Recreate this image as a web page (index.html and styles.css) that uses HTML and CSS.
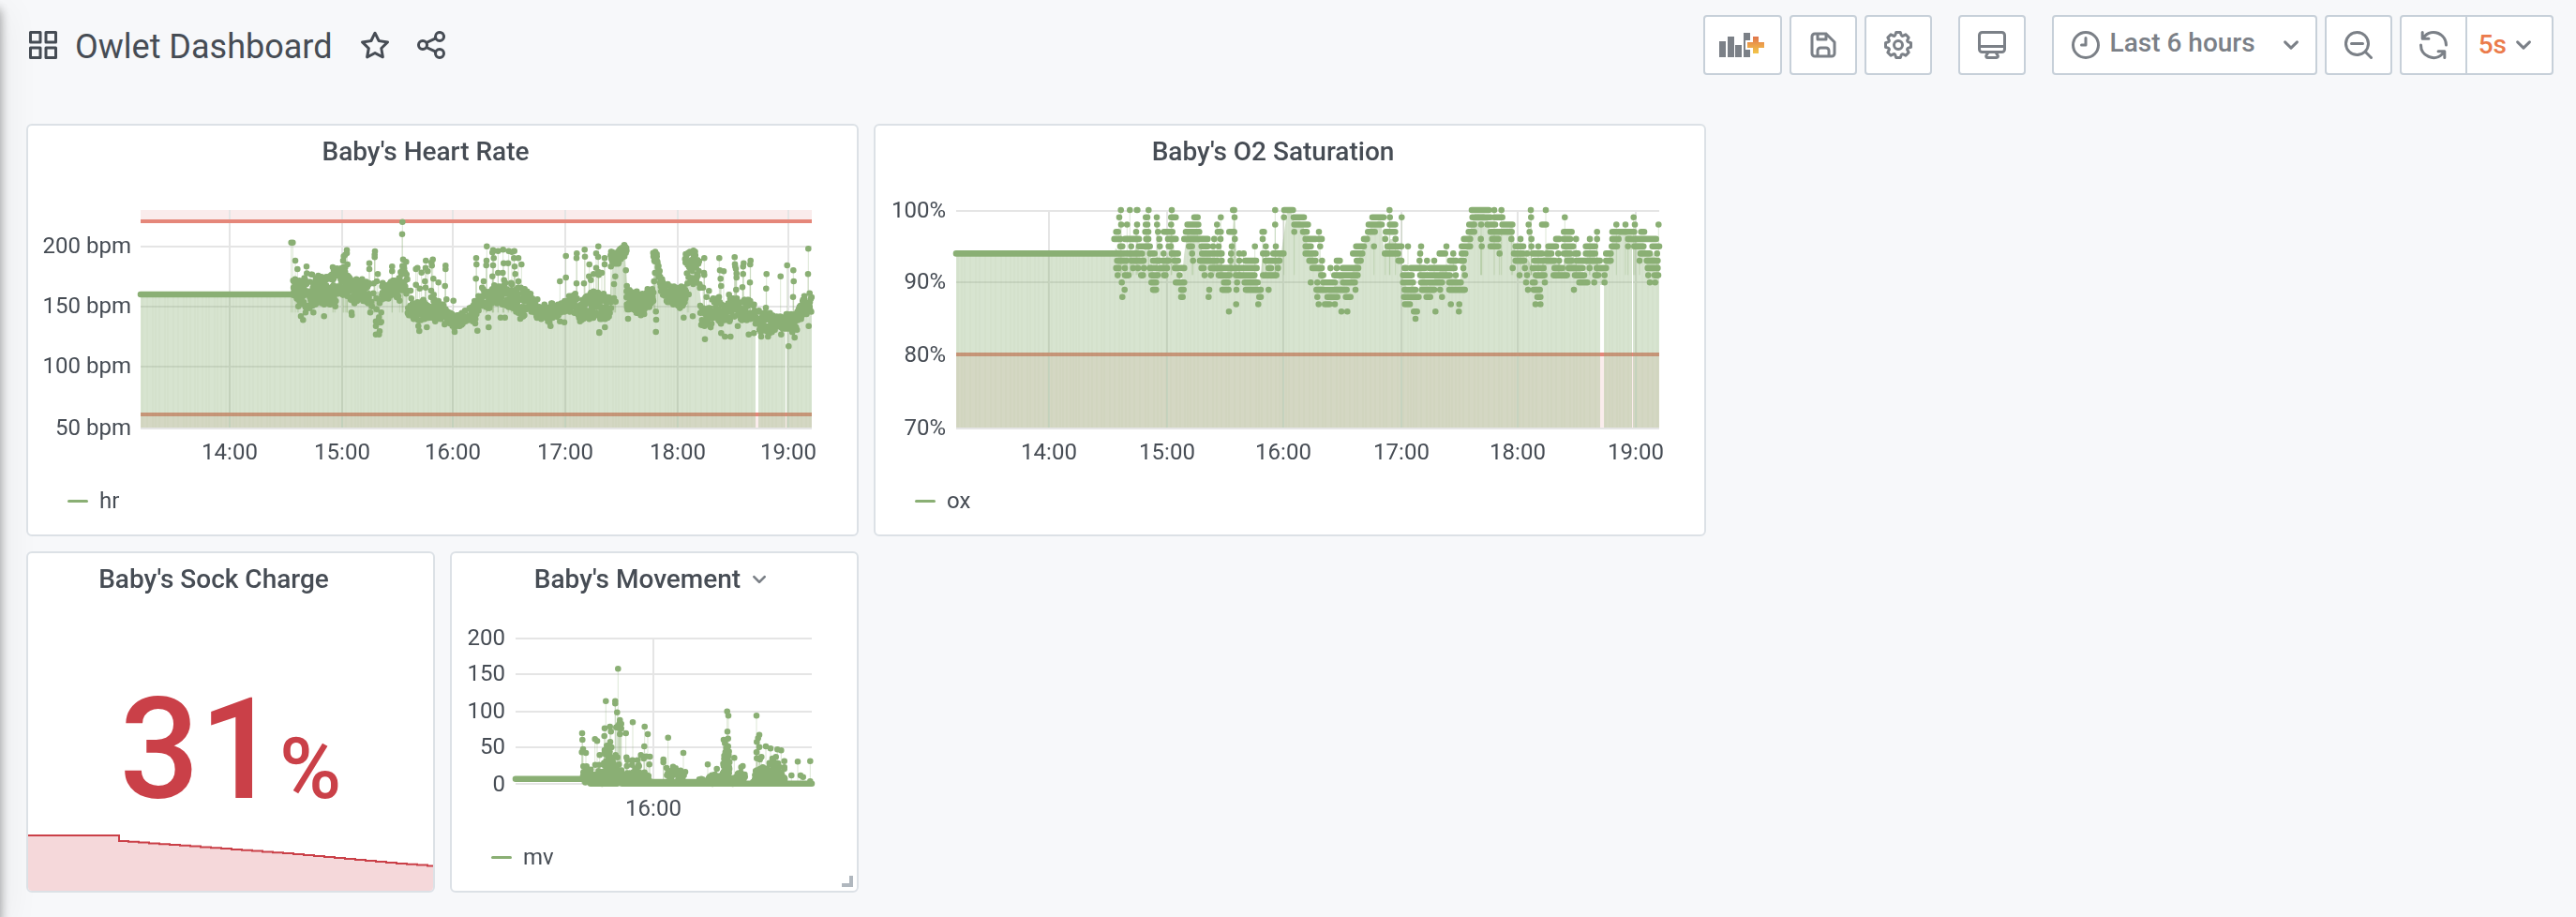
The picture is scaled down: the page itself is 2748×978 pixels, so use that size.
FILE: index.html
```html
<!DOCTYPE html>
<html lang="en">
<head>
<meta charset="utf-8">
<title>Owlet Dashboard</title>
<link rel="stylesheet" href="styles.css">
</head>
<body>
<div class="sidemenu-edge"></div>
<header class="navbar">
  <button class="icon-button" aria-label="Dashboards"><svg class="icon" viewBox="0 0 24 24"><path d="M10,13H3a1,1,0,0,0-1,1v7a1,1,0,0,0,1,1h7a1,1,0,0,0,1-1V14A1,1,0,0,0,10,13ZM9,20H4V15H9ZM21,2H14a1,1,0,0,0-1,1v7a1,1,0,0,0,1,1h7a1,1,0,0,0,1-1V3A1,1,0,0,0,21,2ZM20,9H15V4h5Zm1,4H14a1,1,0,0,0-1,1v7a1,1,0,0,0,1,1h7a1,1,0,0,0,1-1V14A1,1,0,0,0,21,13Zm-1,7H15V15h5ZM10,2H3A1,1,0,0,0,2,3v7a1,1,0,0,0,1,1h7a1,1,0,0,0,1-1V3A1,1,0,0,0,10,2ZM9,9H4V4H9Z"/></svg></button>
  <h1 class="page-title"><a href="#">Owlet Dashboard</a></h1>
  <button class="icon-button" aria-label="Mark as favorite"><svg class="icon" viewBox="0 0 24 24"><path d="M22,9.67A1,1,0,0,0,21.14,9l-5.69-.83L12.9,3a1,1,0,0,0-1.8,0L8.55,8.16,2.86,9a1,1,0,0,0-.81.68,1,1,0,0,0,.25,1l4.13,4-1,5.68A1,1,0,0,0,6.9,21.44L12,18.77l5.1,2.67a.93.93,0,0,0,.46.12,1,1,0,0,0,.59-.19,1,1,0,0,0,.4-1l-1-5.68,4.13-4A1,1,0,0,0,22,9.67Zm-6.15,4a1,1,0,0,0-.29.88l.72,4.2-3.76-2a1.06,1.06,0,0,0-.94,0l-3.76,2,.72-4.2a1,1,0,0,0-.29-.88l-3-3,4.21-.61a1,1,0,0,0,.76-.55L12,5.7l1.88,3.82a1,1,0,0,0,.76.55l4.21.61Z"/></svg></button>
  <button class="icon-button" aria-label="Share dashboard"><svg class="icon" viewBox="0 0 24 24"><path d="M18,14a4,4,0,0,0-3.08,1.48l-5.1-2.35a3.64,3.64,0,0,0,0-2.26l5.1-2.35A4,4,0,1,0,14,6a4.17,4.17,0,0,0,.07.71L8.79,9.14a4,4,0,1,0,0,5.72l5.28,2.43A4.17,4.17,0,0,0,14,18a4,4,0,1,0,4-4ZM18,4a2,2,0,1,1-2,2A2,2,0,0,1,18,4ZM6,14a2,2,0,1,1,2-2A2,2,0,0,1,6,14Zm12,6a2,2,0,1,1,2-2A2,2,0,0,1,18,20Z"/></svg></button>
  <div class="toolbar">
    <div class="button-group">
      <button class="tool tool-add" aria-label="Add panel"><svg class="add-icon" viewBox="0 0 50 30">
        <defs><linearGradient id="plus" x1="0" y1="0" x2="0" y2="1"><stop offset="0" stop-color="#e0744c"/><stop offset=".5" stop-color="#eca04b"/><stop offset="1" stop-color="#f2c64a"/></linearGradient></defs>
        <path class="bars" d="M0 11h7v17H0zM9 6h7v22H9zM17 15h7v13h-7zM26 2h7v26h-7z"/>
        <path class="plus-edge" d="M36 6h6v6h6v6h-6v6h-6v-6h-6v-6h6z"/>
        <path fill="url(#plus)" d="M36 6h6v6h6v6h-6v6h-6v-6h-6v-6h6z"/></svg></button>
      <button class="tool" aria-label="Save dashboard"><svg class="icon" viewBox="0 0 24 24"><path d="m20.71 9.29-6-6a1 1 0 0 0-.32-.21A1.09 1.09 0 0 0 14 3H6a3 3 0 0 0-3 3v12a3 3 0 0 0 3 3h12a3 3 0 0 0 3-3v-8a1 1 0 0 0-.29-.71ZM9 5h4v2H9Zm6 14H9v-3a1 1 0 0 1 1-1h4a1 1 0 0 1 1 1Zm4-1a1 1 0 0 1-1 1h-1v-3a3 3 0 0 0-3-3h-4a3 3 0 0 0-3 3v3H6a1 1 0 0 1-1-1V6a1 1 0 0 1 1-1h1v3a1 1 0 0 0 1 1h6a1 1 0 0 0 1-1V6.41l4 4Z"/></svg></button>
      <button class="tool" aria-label="Dashboard settings"><svg class="icon" viewBox="0 0 24 24"><path d="M21.32,9.55l-1.89-.63.89-1.78A1,1,0,0,0,20.13,6L18,3.87a1,1,0,0,0-1.15-.19l-1.78.89-.63-1.89A1,1,0,0,0,13.5,2h-3a1,1,0,0,0-.95.68L8.92,4.57,7.14,3.68A1,1,0,0,0,6,3.87L3.87,6a1,1,0,0,0-.19,1.15l.89,1.78-1.89.63A1,1,0,0,0,2,10.5v3a1,1,0,0,0,.68.95l1.89.63-.89,1.78A1,1,0,0,0,3.87,18L6,20.13a1,1,0,0,0,1.15.19l1.78-.89.63,1.89a1,1,0,0,0,.95.68h3a1,1,0,0,0,.95-.68l.63-1.89,1.78.89A1,1,0,0,0,18,20.13L20.13,18a1,1,0,0,0,.19-1.15l-.89-1.78,1.89-.63A1,1,0,0,0,22,13.5v-3A1,1,0,0,0,21.32,9.55ZM20,12.78l-1.2.4A2,2,0,0,0,17.64,16l.57,1.14-1.1,1.1L16,17.64a2,2,0,0,0-2.79,1.16l-.4,1.2H11.22l-.4-1.2A2,2,0,0,0,8,17.64l-1.14.57-1.1-1.1L6.36,16A2,2,0,0,0,5.2,13.18L4,12.78V11.22l1.2-.4A2,2,0,0,0,6.36,8L5.79,6.89l1.1-1.1L8,6.36A2,2,0,0,0,10.82,5.2l.4-1.2h1.56l.4,1.2A2,2,0,0,0,16,6.36l1.14-.57,1.1,1.1L17.64,8a2,2,0,0,0,1.16,2.79l1.2.4ZM12,8a4,4,0,1,0,4,4A4,4,0,0,0,12,8Zm0,6a2,2,0,1,1,2-2A2,2,0,0,1,12,14Z"/></svg></button>
    </div>
    <button class="tool" aria-label="Cycle view mode"><svg class="icon" viewBox="0 0 24 24"><path d="M19,2H5A3,3,0,0,0,2,5V15a3,3,0,0,0,3,3H7.64l-.58,1a2,2,0,0,0,0,2,2,2,0,0,0,1.75,1h6.46A2,2,0,0,0,17,21a2,2,0,0,0,0-2l-.59-1H19a3,3,0,0,0,3-3V5A3,3,0,0,0,19,2ZM8.77,20,10,18H14l1.2,2ZM20,15a1,1,0,0,1-1,1H5a1,1,0,0,1-1-1V14H20Zm0-3H4V5A1,1,0,0,1,5,4H19a1,1,0,0,1,1,1Z"/></svg></button>
    <div class="button-group">
      <button class="tool time-picker"><svg class="icon" viewBox="0 0 24 24"><path class="line" d="M12 3a9 9 0 1 0 0 18a9 9 0 1 0 0-18M12 7v5H9"/></svg><span class="time-label">Last 6 hours</span><svg class="icon" viewBox="0 0 24 24"><path d="M17,9.17a1,1,0,0,0-1.41,0L12,12.71,8.46,9.17a1,1,0,0,0-1.41,0,1,1,0,0,0,0,1.42l4.24,4.24a1,1,0,0,0,1.42,0L17,10.59A1,1,0,0,0,17,9.17Z"/></svg></button>
      <button class="tool" aria-label="Zoom out"><svg class="icon" viewBox="0 0 24 24"><path d="M21.71,20.29,18,16.61A9,9,0,1,0,16.61,18l3.68,3.68a1,1,0,0,0,1.42,0A1,1,0,0,0,21.71,20.29ZM11,18a7,7,0,1,1,7-7A7,7,0,0,1,11,18Zm4-8H7a1,1,0,0,0,0,2h8a1,1,0,0,0,0-2Z"/></svg></button>
      <div class="refresh">
        <button class="tool" aria-label="Refresh"><svg class="icon" viewBox="0 0 24 24"><path d="M19.91,15.51H15.38a1,1,0,0,0,0,2h2.4A8,8,0,0,1,4,12a1,1,0,0,0-2,0,10,10,0,0,0,16.88,7.23V21a1,1,0,0,0,2,0V16.5A1,1,0,0,0,19.91,15.51ZM12,2A10,10,0,0,0,5.12,4.77V3a1,1,0,0,0-2,0V7.5a1,1,0,0,0,1,1h4.5a1,1,0,0,0,0-2H6.22A8,8,0,0,1,20,12a1,1,0,0,0,2,0A10,10,0,0,0,12,2Z"/></svg></button>
        <button class="tool interval"><span>5s</span><svg class="icon" viewBox="0 0 24 24"><path d="M17,9.17a1,1,0,0,0-1.41,0L12,12.71,8.46,9.17a1,1,0,0,0-1.41,0,1,1,0,0,0,0,1.42l4.24,4.24a1,1,0,0,0,1.42,0L17,10.59A1,1,0,0,0,17,9.17Z"/></svg></button>
      </div>
    </div>
  </div>
</header>
<main class="grid">
  <section class="panel wide">
    <h2 class="panel-title">Baby's Heart Rate</h2>
    <svg class="chart" id="hr" viewBox="30 194 884 324"></svg>
    <div class="legend"><i class="swatch"></i><span>hr</span></div>
  </section>
  <section class="panel wide">
    <h2 class="panel-title">Baby's O2 Saturation</h2>
    <svg class="chart" id="ox" viewBox="934 194 884 324"></svg>
    <div class="legend"><i class="swatch"></i><span>ox</span></div>
  </section>
  <section class="panel small first">
    <h2 class="panel-title">Baby's Sock Charge</h2>
    <p class="stat">31<span class="unit">%</span></p>
    <svg class="spark" id="charge" viewBox="0 0 432 60" preserveAspectRatio="none"></svg>
  </section>
  <section class="panel small">
    <h2 class="panel-title">Baby's Movement<svg class="menu-caret" viewBox="0 0 24 24"><path d="M17,9.17a1,1,0,0,0-1.41,0L12,12.71,8.46,9.17a1,1,0,0,0-1.41,0,1,1,0,0,0,0,1.42l4.24,4.24a1,1,0,0,0,1.42,0L17,10.59A1,1,0,0,0,17,9.17Z"/></svg></h2>
    <svg class="chart" id="mv" viewBox="482 650 432 248"></svg>
    <div class="legend"><i class="swatch"></i><span>mv</span></div>
    <i class="resize-handle"></i>
  </section>
</main>
<script src="charts.js"></script>
</body>
</html>
```
FILE: styles.css
```css
* { box-sizing: border-box; }
body {
  margin: 0;
  min-height: 100vh;
  background: #f7f8fa;
  color: #464c54;
  font-family: Roboto, "Liberation Sans", sans-serif;
  font-size: 24px;
}
button { font: inherit; color: inherit; cursor: pointer; }
.sidemenu-edge {
  position: fixed;
  top: 0;
  bottom: 0;
  left: -20px;
  width: 20px;
  box-shadow: 0 10px 12px rgba(0, 0, 0, .4), 0 10px 40px rgba(0, 0, 0, .1);
}
.navbar {
  display: flex;
  align-items: center;
  padding: 16px 24px 16px 28px;
}
.icon { display: block; width: 36px; height: 36px; fill: currentColor; flex: none; }
.icon .line { fill: none; stroke: currentColor; stroke-width: 2; stroke-linecap: round; stroke-linejoin: round; }
.icon-button { padding: 0; border: 0; background: none; margin-right: 24px; }
.page-title {
  margin: 0 28px 0 -8px;
  padding-top: 4px;
  font-size: 36px;
  line-height: 48px;
  font-weight: 400;
}
.page-title a { color: inherit; text-decoration: none; }
.toolbar { display: flex; gap: 28px; margin-left: auto; }
.button-group { display: flex; gap: 8px; }
.tool {
  display: flex;
  align-items: center;
  justify-content: center;
  width: 72px;
  height: 64px;
  padding: 0;
  border: 2px solid #c7d0d9;
  border-radius: 4px;
  background: #fff;
  color: #7b8087;
  font-size: 28px;
  line-height: 32px;
  font-weight: 500;
}
.tool-add { width: 84px; }
.add-icon { width: 50px; height: 30px; }
.bars { fill: #7b8087; }
.plus-edge { fill: #fff; stroke: #fff; stroke-width: 4; }
.time-picker { width: auto; padding: 0 8px 0 16px; }
.time-label { margin: 0 20px 0 8px; padding-bottom: 4px; }
.refresh { display: flex; }
.refresh .tool:first-child { border-radius: 4px 0 0 4px; }
.refresh .interval {
  width: auto;
  margin-left: -2px;
  padding: 0 12px;
  border-radius: 0 4px 4px 0;
}
.interval span { color: #eb7b4b; }
.grid {
  display: grid;
  grid-template-columns: repeat(24, 1fr);
  grid-auto-rows: minmax(60px, auto);
  gap: 16px;
  padding: 36px 24px 26px 28px;
}
.panel {
  position: relative;
  display: flex;
  flex-direction: column;
  overflow: hidden;
  border: 2px solid #dce1e6;
  border-radius: 6px;
  background: #fff;
}
.wide { grid-column: span 8; grid-row: span 6; }
.small { grid-column: span 4; grid-row: span 5; }
.first { grid-column: 1 / span 4; }
.panel-title {
  display: flex;
  align-items: center;
  justify-content: center;
  height: 56px;
  margin: 0 0 4px;
  padding-right: 36px;
  font-size: 28px;
  line-height: 32px;
  font-weight: 500;
}
.menu-caret { width: 32px; height: 32px; margin: 0 -36px 0 4px; fill: #7b8087; }
.chart { display: block; width: 100%; flex: 1; min-height: 0; }
.chart text { font-size: 24px; fill: #464c54; }
.chart .y { text-anchor: end; }
.chart .x { text-anchor: middle; }
.gridline { fill: none; stroke: #e5e5e5; stroke-width: 2; }
.area { fill: #8aaf74; fill-opacity: .34; }
.stripes { stroke: #6f9a5a; stroke-opacity: .06; stroke-width: 1; }
.stem { fill: none; stroke: #8aaf74; stroke-opacity: .3; stroke-width: 1; }
.marks { fill: none; stroke: #8aaf74; stroke-linecap: round; stroke-width: 6.6; }
.zone { fill: #faecec; }
.limit { stroke: #e5877a; stroke-width: 4; }
.gap { fill: #fff; }
.legend {
  display: flex;
  align-items: center;
  gap: 12px;
  height: 32px;
  margin: 0 0 20px 42px;
  line-height: 32px;
}
.swatch { width: 22px; height: 3px; border-radius: 2px; background: #8aaf74; }
.stat {
  flex: 1;
  margin: 0;
  padding-top: 60px;
  text-align: center;
  color: #ca4048;
  font-size: 150px;
  line-height: 180px;
  font-weight: 500;
}
.unit { font-size: 90px; line-height: 1; }
.spark { display: block; width: 100%; height: 60px; flex: none; }
.spark .fill { fill: #f5d8da; }
.spark .edge { fill: none; stroke: #ca4048; stroke-width: 2; }
.resize-handle {
  position: absolute;
  right: 4px;
  bottom: 4px;
  width: 12px;
  height: 12px;
  border: solid #b0b7be;
  border-width: 0 4px 4px 0;
}
```
FILE: charts.js
```js
// Series are stored in thirds of a pixel, relative to each chart's origin.
let seed = 7;
function random() {
  seed = (seed * 16807) % 2147483647;
  return seed / 2147483647;
}

function pairs(text, shift) {
  return text.trim().split(/\s+/).map(function (p) {
    const v = p.split(',').map(Number);
    return { x: v[0] + shift, y: v[1], len: 0, single: true };
  });
}

// Scatter readings between the upper and lower edge of a band.
function scatter(band, shift, density, step) {
  const out = [];
  for (let i = 0; i < band.length - 1; i++) {
    const a = band[i], b = band[i + 1];
    const count = Math.ceil((b[0] - a[0]) * density);
    for (let k = 0; k < count; k++) {
      const t = (k + random()) / count;
      const top = a[1] + (b[1] - a[1]) * t, bottom = a[2] + (b[2] - a[2]) * t;
      const y = Math.round((top + (bottom - top) * random()) / step) * step;
      out.push({ x: a[0] + (b[0] - a[0]) * t + shift, y: y, len: 0 });
    }
  }
  return out;
}

function runs(y, text, shift) {
  return text.trim().split(/\s+/).filter(Boolean).map(function (r) {
    const v = r.split('-').map(Number);
    return { x: v[0] + shift, y: y, len: (v[1] || v[0]) - v[0], single: !v[1] };
  });
}

function draw(id, c) {
  const X = function (x) { return (c.ox + x / 3).toFixed(1); };
  const Y = function (y) { return (c.oy + y / 3).toFixed(1); };
  let s = '';
  (c.zones || []).forEach(function (z) {
    s += `<rect class="zone" x="${c.left}" y="${z[0]}" width="${c.right - c.left}" height="${z[1] - z[0]}"/>`;
  });
  let grid = '';
  c.yticks.forEach(function (t) { if (t[3] !== 0) grid += `M${c.left} ${t[0]}H${c.right}`; });
  c.xticks.forEach(function (t) { grid += `M${t[0]} ${c.top}V${c.bottom}`; });
  s += `<path class="gridline" d="${grid}"/>`;
  (c.limits || []).forEach(function (y) {
    s += `<line class="limit" x1="${c.left}" x2="${c.right}" y1="${y}" y2="${y}"/>`;
  });
  const base = c.bottom - 1;
  if (c.area) {
    const bucket = 10, sums = {};
    c.points.forEach(function (p) {
      if (p.single && c.skipSingles) return;
      for (let x = p.x; x <= p.x + p.len; x += bucket) {
        const k = Math.round(x / bucket);
        (sums[k] = sums[k] || []).push(p.y);
      }
    });
    let d = `M${c.left} ${base}V${Y(c.flatY)}H${X(c.flatEnd)}`;
    Object.keys(sums).map(Number).sort(function (a, b) { return a - b; }).forEach(function (k) {
      if (k * bucket <= c.flatEnd) return;
      const v = sums[k];
      const x = Math.min(c.right, c.ox + k * bucket / 3);
      d += `L${x.toFixed(1)} ${Y(v.reduce(function (a, b) { return a + b; }) / v.length)}`;
    });
    d += `H${c.right}V${base}Z`;
    s += `<clipPath id="${id}-clip"><path d="${d}"/></clipPath><path class="area" d="${d}"/>`;
    let stripes = '';
    for (let x = c.left + 2; x < c.right; x += 3 + Math.floor(random() * 4)) stripes += `M${x} ${c.top}V${base}`;
    s += `<path class="stripes" clip-path="url(#${id}-clip)" d="${stripes}"/>`;
  }
  let stems = '', marks = '';
  c.points.forEach(function (p) {
    if (p.single) stems += `M${X(p.x)} ${Y(p.y)}V${Y(Math.max(p.y, c.stemTo || 0))}`;
    marks += `M${X(p.x)} ${Y(p.y)}h${(p.len / 3 || .01).toFixed(2)}`;
  });
  s += `<path class="stem" d="${stems}"/>`;
  (c.gaps || []).forEach(function (g) {
    s += `<rect class="gap" x="${g[0]}" y="${g[2]}" width="${g[1]}" height="${base - g[2]}"/>`;
    s += `<rect class="zone" x="${g[0]}" y="${c.lowLimit}" width="${g[1]}" height="${base - c.lowLimit}"/>`;
    s += `<line class="limit" x1="${g[0]}" x2="${g[0] + g[1]}" y1="${c.lowLimit}" y2="${c.lowLimit}"/>`;
  });
  marks += `M${c.left} ${Y(c.flatY)}H${X(c.flatEnd)}`;
  s += `<path class="marks" d="${marks}"/>`;
  c.yticks.forEach(function (t) { s += `<text class="y" x="${c.labelX}" y="${t[1]}">${t[2]}</text>`; });
  c.xticks.forEach(function (t) { s += `<text class="x" x="${t[0]}" y="${c.labelY}">${t[1]}</text>`; });
  document.getElementById(id).innerHTML = s;
}

const hrEarly = [[877,525,590],[900,535,615],[920,515,635],[950,515,615],[980,530,615],[1010,500,618],[1045,490,580],[1065,540,610],[1090,525,615],[1122,545,615]];
const hrMid = [[1160,545,600],[1190,530,598],[1212,540,590],[1228,490,580],[1244,490,600]];
const hrLate = [[1244,610,645],[1265,610,668],[1290,600,668],[1320,590,668],[1350,605,672],[1377,640,680],[1400,645,690],[1440,630,668],[1465,590,672],[1480,560,622],[1500,560,630],[1530,550,612],[1570,545,625],[1610,560,655],[1640,575,640],[1660,622,660],[1700,610,672],[1740,605,640],[1770,575,640],[1800,590,672],[1840,570,660],[1870,575,672],[1896,595,655]];
const hrPeak = [[1894,437,480],[1912,450,490],[1928,430,480],[1946,425,462]];
const hrNight = [[1944,565,630],[1970,570,640],[2000,570,655],[2032,560,610]];
const hrSpike = [[2030,446,455],[2042,446,500],[2052,500,560],[2064,540,600],[2090,548,612],[2120,555,630],[2136,565,610]];
const hrSpike2 = [[2132,440,510],[2150,440,545],[2162,435,550],[2176,450,545],[2182,540,640]];
const hrEnd = [[2180,610,705],[2200,625,700],[2215,600,690],[2230,590,660],[2260,620,690],[2280,590,660],[2310,595,672],[2350,598,660],[2370,635,705],[2400,640,710],[2430,655,690],[2460,640,700],[2490,640,705],[2510,595,650],[2538,590,645]];

draw('hr', {
  ox: 20, oy: 120, left: 150, right: 866, top: 224, bottom: 457,
  labelX: 140, labelY: 490, lowLimit: 442, area: true, skipSingles: true,
  zones: [[224, 236], [442, 456]], limits: [236, 442],
  yticks: [[263,270,'200 bpm'],[327,334,'150 bpm'],[391,398,'100 bpm'],[457,464,'50 bpm']],
  xticks: [[245,'14:00'],[365,'15:00'],[483,'16:00'],[603,'17:00'],[723,'18:00'],[841,'19:00']],
  flatY: 582, flatEnd: 873, stemTo: 640,
  gaps: [[806, 3, 352], [838, 1, 352]],
  points: [].concat(
    scatter(hrEarly, 0, 1.15, 3.84), scatter(hrMid, 0, .9, 3.84), scatter(hrLate, 0, .9, 3.84),
    scatter(hrPeak, 0, .9, 3.84), scatter(hrNight, 0, 1.2, 3.84), scatter(hrSpike, 0, 1.1, 3.84),
    scatter(hrSpike2, 0, 1, 3.84), scatter(hrEnd, 0, .8, 3.84),
    pairs('872,416 877,416 885,474 892,501 921,493 903,652 910,664 895,620 918,640 943,640 977,652 1013,620 1005,495 1008,505 1040,460 1045,455 1050,440 1050,450 1038,474 1052,486 1065,640 1066,648 1122,482 1122,501 1120,545 1125,640 1128,605 1130,620 1135,578 1140,444 1139,455 1139,463 1149,517 1146,540 1136,547 1145,595 1155,610 1145,629 1160,640 1153,655 1143,668 1158,672 1143,683 1160,670 1143,710 1153,710 1155,700 1195,493 1195,508 1219,602 1228,350 1227,389 1230,470 1240,478 1254,570 1256,595 1271,551 1283,563 1271,501 1276,497 1289,512 1303,474 1302,497 1309,508 1300,540 1302,560 1320,570 1327,532 1325,470 1322,490 1321,480 1343,544 1328,583 1343,605 1366,490 1366,501 1364,555 1369,598 1279,683 1282,699 1306,687 1363,678', 0),
    pairs('41,602 44,690 45,702 114,466 115,486 113,532 111,675 118,698 138,540 148,428 147,474 146,489 152,656 154,687 168,440 166,448 170,466 168,489 166,524 184,443 200,439 218,443 228,446 236,443 202,482 216,482 184,513 199,513 203,536 235,466 249,466 259,486 237,493 239,517 226,545 249,540 192,656 206,656 248,560 255,660 310,598 382,540 401,459 401,528 436,451 435,466 435,547 461,439 462,461 459,547 476,486 475,524 481,536 498,451 504,462 505,428 498,497 505,510 506,520 490,517 516,513 525,466 525,486 559,524 555,549 560,605 555,594 545,493 508,705 508,703 526,687 352,683 382,668 396,671 588,424 593,505 596,555 600,660 684,474 695,489 686,513 683,540 689,637 690,663 689,702 778,656 807,652 794,582 790,547 844,466 843,513 844,520 840,560 859,571 851,590 846,725 892,466 894,505 906,508 896,532 898,555 891,590 923,583 941,463 942,485 943,493 945,500 947,515 947,528 946,567 970,482 968,493 968,517 966,559 992,474 991,486 990,544 986,710 1003,706 1043,517 1042,563 1041,625 1088,524 1109,489 1129,505 1130,540 1128,590 1177,436 1176,517 1178,683 1181,578 1164,587 1114,748 928,717 910,717 898,706 1026,717 1048,717 1133,720 1090,710 951,683', 1350))
});

const oxRuns = {
  100: ['827 856 878-880 916 990 1186-1190 1321', '0-28 337 600-655 672 695 789 837'],
  99: ['822 907-912 942 988-1003 1062-1073 1147 1191 1349', '30-63 282-318 338 376 602-660 672-698 790 898 1118'],
  98: ['828 847 879 907-912 943 988 1040-1075 1135 1321', '32-76 270-312 338-355 592-608 630 650-675 698-730 782 825-838 1063 1092 1122 1198'],
  97: ['812-818 876 905-915 946 965-992 1035-1078 1137-1147 1174-1190 1280-1285', '32 60-72 111 268-290 325-355 590-608 660-728 785 895-920 1001 1050-1120 1142-1152'],
  96: ['806-825 840-885 908-915 950 978-1003 1030-1105 1126 1146 1192 1281', '68-100 110-120 255-265 323 356 575-595 629 665-685 727 756 791 870-880 895-915 934 978 1001 1050-1070 1100-1190'],
  95: ['825-832 860 885-920 952 980-987 1045-1055 1085-1105 1122 1140 1182 1256 1291 1323', '68-85 115 230-255 287 330-375 396 438 519 568-595 632 660-685 740-765 791 813 845-870 895-925 965-995 1048-1065 1100 1120-1150 1178-1200'],
  94: ['810-895 920-935 964 990-1010 1055 1087-1150 1180 1206 1220 1282-1295 1315-1348', '68-100 220-250 322-365 435 497-515 541 568-580 689 735-765 777 795-825 840-855 877 895-915 930-940 965-995 1030-1045 1140-1170 1193'],
  93: ['815-845 860-900 930-950 960-980 998-1010 1058 1080-1135 1150 1178 1206 1225-1260 1290-1335', '80-100 121 168-178 232-245 365-375 433 457 480 530-550 565-575 740-768 800-830 840-865 880 905-920 935-1010 1030-1045 1137 1160-1195'],
  92: ['812-820 840 866 882 901 920-940 955-975 1000-1030 1085-1092 1115-1180 1195-1262 1300-1308 1330', '90-120 148 168 187-237 385-390 405-450 465-545 573 731 770 795-830 865-890 910-955 977 1000-1030 1163-1195'],
  91: ['817 840-852 892-898 925-945 965-970 1015 1095 1115 1140-1175 1195-1255 1282-1325', '118-125 160-235 380-408 435-530 549 578 753 777 805-833 862-905 930-960 995-1005 1025 1165 1185-1197'],
  90: ['830 925-940 1003-1030 1157-1170 1199 1223-1265', '85 106 125-162 188-226 380-412 438-505 528-565 774 795-802 834 944-970 992 1025 1170 1187'],
  89: ['839 930-940 1020-1028 1110 1152-1172 1197 1227-1275 1300', '103-200 228 385-420 440-480 499 528-578 780 798-818 927'],
  88: ['832 1020-1025 1108 1270-1275', '106 138-170 197-212 383-430 455-467 505 810-820'],
  87: ['1196 1267', '110 130-145 162 386-402 533 560 804 820'],
  86: ['1173', '183 202 415-425 484 559'],
  85: ['', '420']
};
let oxPoints = [];
Object.keys(oxRuns).forEach(function (level) {
  const y = 312 + (100 - level) * 23.2;
  oxPoints = oxPoints.concat(runs(y, oxRuns[level][0], 0), runs(y, oxRuns[level][1], 1350));
});
draw('ox', {
  ox: 920, oy: 120, left: 1020, right: 1770, top: 224, bottom: 457,
  labelX: 1009, labelY: 490, lowLimit: 378, area: true, skipSingles: true,
  zones: [[378, 456]], limits: [378],
  yticks: [[225,232,'100%'],[301,308,'90%'],[378,386,'80%',0],[457,464,'70%']],
  xticks: [[1119,'14:00'],[1245,'15:00'],[1369,'16:00'],[1495,'17:00'],[1619,'18:00'],[1745,'19:00']],
  flatY: 451.2, flatEnd: 806, stemTo: 520,
  gaps: [[1707, 4, 304], [1741, 1, 264]],
  points: oxPoints
});

draw('mv', {
  ox: 470, oy: 570, left: 550, right: 866, top: 680, bottom: 837,
  labelX: 539, labelY: 870,
  yticks: [[681,688,'200'],[719,726,'150'],[759,766,'100'],[797,804,'50'],[836,844,'0']],
  xticks: [[697,'16:00']],
  flatY: 782, flatEnd: 455, stemTo: 797,
  points: [].concat(
    runs(797, '580-1188', 0), runs(792, '580-960 1000-1090', 0), runs(797, '480-565', 0), runs(784, '458-570', 0),
    scatter([[455,740,798],[472,745,790],[490,755,798],[520,755,798]], 0, .7, 2.3),
    scatter([[522,700,795],[535,680,795],[550,700,795],[560,755,795],[580,745,795]], 0, 1.5, 2.3),
    scatter([[590,760,797],[615,760,797],[635,735,797],[650,760,797],[670,765,797]], 0, .7, 2.3),
    scatter([[720,760,797],[750,750,797],[780,765,797]], 0, .4, 2.3),
    scatter([[825,780,797],[880,765,797],[898,765,797]], 0, .4, 2.3),
    scatter([[903,715,797],[912,680,797],[925,695,797]], 0, 2.6, 2.3),
    scatter([[935,780,797],[962,755,797],[976,770,797]], 0, .5, 2.3),
    scatter([[1005,750,797],[1030,745,797],[1060,720,797],[1082,740,797],[1103,775,797]], 0, 1, 2.3),
    pairs('568,430 529,533 559,533 559,541 565,569 574,594 578,606 572,605 568,612 562,617 578,621 572,620 574,639 593,636 615,601 653,615 663,639 652,678 453,636 454,657 456,687 452,697 465,699 494,655 501,661 525,620 542,615 545,631 524,645 543,664 509,706 532,676 547,681 525,690 495,737 507,737 457,742 467,742 560,706 566,713 571,736 595,713 598,722 614,722 613,737 630,722 596,741 641,706 658,710 670,711 650,717 668,736 635,741 728,650 777,699 713,720 713,729 723,747 744,743 752,748 768,755 783,760 738,766 855,736 884,750 917,566 921,580 918,631 906,657 920,653 910,668 920,678 922,704 940,715 967,741 962,745 1011,580 1020,641 1016,652 1012,664 1020,680 1011,697 1012,716 1027,712 1022,720 1041,678 1056,685 1078,688 1090,691 1073,712 1062,717 1080,732 1100,725 1100,745 1100,750 1123,771 1143,727 1152,771 1160,776 1183,725 1183,790', 0))
});

// Battery charge falls one percent at a time.
(function () {
  const nodes = [[97, 7], [219, 16], [283, 21], [350, 27], [382, 30], [432, 34]];
  let d = 'M0 1H97V7';
  for (let x = 107; x <= 432; x += 11) {
    let i = 0;
    while (i < nodes.length - 2 && nodes[i + 1][0] < x) i++;
    const a = nodes[i], b = nodes[i + 1];
    d += `H${x}V${(a[1] + (b[1] - a[1]) * (x - a[0]) / (b[0] - a[0])).toFixed(1)}`;
  }
  d += 'H432';
  document.getElementById('charge').innerHTML = `<path class="fill" d="${d}V60H0Z"/><path class="edge" d="${d}"/>`;
})();
```
